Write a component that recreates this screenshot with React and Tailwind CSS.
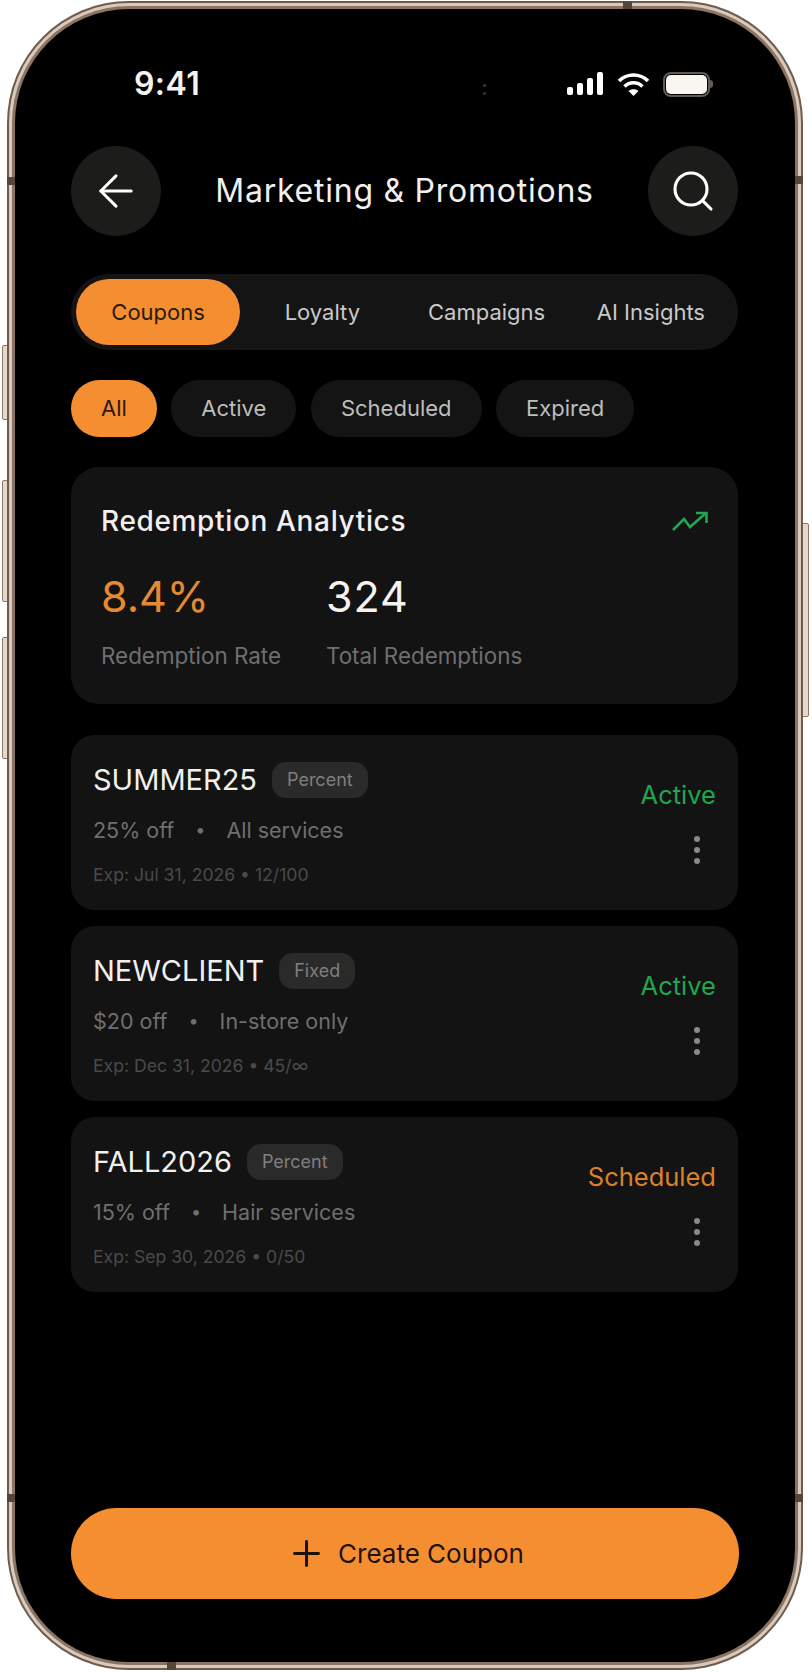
import React from 'react';
import { ArrowLeft, Search, Plus } from 'lucide-react';

const TABS = ['Coupons', 'Loyalty', 'Campaigns', 'AI Insights'];
const FILTERS = ['All', 'Active', 'Scheduled', 'Expired'];

const COUPONS = [
  { code: 'SUMMER25', type: 'Percent', off: '25% off', scope: 'All services', exp: 'Exp: Jul 31, 2026 • 12/100', status: 'Active', statusCls: 'text-[#20a551]' },
  { code: 'NEWCLIENT', type: 'Fixed', off: '$20 off', scope: 'In-store only', exp: 'Exp: Dec 31, 2026 • 45/∞', status: 'Active', statusCls: 'text-[#20a551]' },
  { code: 'FALL2026', type: 'Percent', off: '15% off', scope: 'Hair services', exp: 'Exp: Sep 30, 2026 • 0/50', status: 'Scheduled', statusCls: 'text-[#d9822b]' },
];

function SignalIcon() {
  return (
    <svg width="37" height="24" viewBox="0 0 37 24" fill="#fff">
      <rect x="0" y="15" width="6" height="8" rx="2" />
      <rect x="10" y="11" width="6" height="12" rx="2" />
      <rect x="20" y="6" width="6" height="17" rx="2" />
      <rect x="30" y="0" width="6" height="23" rx="2" />
    </svg>
  );
}

function WifiIcon() {
  return (
    <svg width="33" height="25" viewBox="0 0 33 25" fill="none" stroke="#fff" strokeWidth="3.6">
      <path d="M2 9 C10 1 23 1 31 9" />
      <path d="M7.5 14.5 C12.5 9.5 20.5 9.5 25.5 14.5" />
      <path d="M16.5 24 L11.5 19 C14 16.5 19 16.5 21.5 19 Z" fill="#fff" stroke="none" />
    </svg>
  );
}

function BatteryIcon() {
  return (
    <div className="flex items-center">
      <div className="w-[47px] h-[25px] rounded-[8px] border-[2px] border-[#5f5c5a] p-[1px]">
        <div className="w-full h-full rounded-[5px] bg-[#faf6f2]" />
      </div>
      <div className="w-[3px] h-[8px] rounded-r-full bg-[#5f5c5a]" />
    </div>
  );
}

function TrendIcon() {
  return (
    <svg width="36" height="21" viewBox="0 0 36 21" fill="none" stroke="#20a551" strokeWidth="2.6">
      <path d="M1 19 L12 8 L18 16 L34 2" />
      <path d="M24 2 L34.5 2 L34.5 12" />
    </svg>
  );
}

function CouponCard({ c }) {
  return (
    <div className="h-[175px] rounded-[24px] bg-[#131313] pl-[22px] pr-[22px] flex justify-between">
      <div className="pt-[27px]">
        <div className="flex items-center gap-[15px] h-[36px]">
          <span className="text-[29px] leading-[36px] text-[#f2f0ee]">{c.code}</span>
          <span className="h-[36px] px-[15px] rounded-[14px] bg-[#2a2a2a] text-[18px] leading-[36px] text-[#7f7f7f]">{c.type}</span>
        </div>
        <div className="mt-[14px] flex items-center gap-[21px] text-[21.5px] leading-[36px] text-[#6f6f6f]">
          <span>{c.off}</span>
          <span className="text-[18px]">•</span>
          <span>{c.scope}</span>
        </div>
        <div className="mt-[9px] text-[17.6px] leading-[36px] text-[#4a4a4a]">{c.exp}</div>
      </div>
      <div className="flex flex-col items-end pt-[43px]">
        <span className={`text-[25.5px] leading-[34px] ${c.statusCls}`}>{c.status}</span>
        <div className="mt-[24px] mr-[16px] flex flex-col gap-[5px]">
          <span className="w-[6px] h-[6px] rounded-full bg-[#8a8a8a]" />
          <span className="w-[6px] h-[6px] rounded-full bg-[#8a8a8a]" />
          <span className="w-[6px] h-[6px] rounded-full bg-[#8a8a8a]" />
        </div>
      </div>
    </div>
  );
}

export default function App() {
  return (
    <div className="relative w-[812px] h-[1672px] bg-white overflow-hidden font-['Inter',sans-serif]">
      {/* side buttons */}
      <div className="absolute left-[2px] top-[345px] w-[7px] h-[75px] rounded-l-[2px] bg-[#e6d8cb] border border-[#8d7766]" />
      <div className="absolute left-[2px] top-[480px] w-[7px] h-[122px] rounded-l-[2px] bg-[#e6d8cb] border border-[#8d7766]" />
      <div className="absolute left-[2px] top-[637px] w-[7px] h-[122px] rounded-l-[2px] bg-[#e6d8cb] border border-[#8d7766]" />
      <div className="absolute left-[801px] top-[523px] w-[8px] h-[194px] rounded-r-[2px] bg-[#e6d8cb] border border-[#8d7766]" />

      {/* phone frame */}
      <div className="absolute left-[7px] top-[1px] w-[796px] h-[1669px] rounded-[122px] bg-[#6e5b4b] p-[2px]">
        <div className="w-full h-full rounded-[120px] bg-[#d9cabd] p-[3px]">
          <div className="w-full h-full rounded-[117px] bg-[#8a7564] p-[3px]">
            <div className="w-full h-full rounded-[114px] bg-black overflow-hidden pl-[56px] pr-[57px] pb-[63px] flex flex-col">
              {/* status bar */}
              <div className="mt-[60px] h-[30px] flex items-center justify-between shrink-0">
                <span className="ml-[63px] text-[32px] leading-[30px] font-semibold tracking-[0.4px] text-[#f5f2ef]">9:41</span>
                <div className="flex items-center gap-[13px] mr-[25px]">
                  <SignalIcon />
                  <WifiIcon />
                  <BatteryIcon />
                </div>
              </div>

              {/* header */}
              <div className="mt-[47px] flex items-center justify-between shrink-0">
                <div className="w-[90px] h-[90px] rounded-full bg-[#1c1c1b] flex items-center justify-center">
                  <ArrowLeft size={52} strokeWidth={1.4} color="#fff" />
                </div>
                <h1 className="text-[32px] leading-[40px] font-normal tracking-[0.75px] text-[#f2f0ee]">Marketing &amp; Promotions</h1>
                <div className="w-[90px] h-[90px] rounded-full bg-[#1c1c1b] flex items-center justify-center">
                  <Search size={48} strokeWidth={1.55} color="#fff" />
                </div>
              </div>

              {/* tabs */}
              <div className="mt-[38px] h-[76px] rounded-full bg-[#141414] p-[5px] flex shrink-0">
                {TABS.map((t, i) => (
                  <div
                    key={t}
                    className={`flex-1 rounded-full flex items-center justify-center text-[22px] ${i === 0 ? 'bg-[#f58e30] text-[#2a1b0c]' : 'text-[#c9c9c9]'}`}
                  >
                    {t}
                  </div>
                ))}
              </div>

              {/* filters */}
              <div className="mt-[30px] flex gap-[14.5px] shrink-0">
                {FILTERS.map((f, i) => (
                  <div
                    key={f}
                    className={`h-[57px] px-[30px] rounded-full flex items-center text-[22px] ${i === 0 ? 'bg-[#f58e30] text-[#2a1b0c]' : 'bg-[#141414] text-[#bdbdbd]'}`}
                  >
                    {f}
                  </div>
                ))}
              </div>

              {/* analytics */}
              <div className="mt-[30px] h-[237px] rounded-[28px] bg-[#131313] px-[30px] pt-[36px] shrink-0">
                <div className="flex items-center justify-between h-[36px]">
                  <span className="text-[28px] leading-[36px] font-medium tracking-[0.65px] text-[#f2f0ee]">Redemption Analytics</span>
                  <TrendIcon />
                </div>
                <div className="mt-[31px] flex gap-[45px]">
                  <div>
                    <div className="text-[43px] leading-[52px] text-[#e48a30]">8.4%</div>
                    <div className="mt-[19px] text-[22.4px] leading-[30px] text-[#6f6f6f]">Redemption Rate</div>
                  </div>
                  <div>
                    <div className="text-[43px] leading-[52px] tracking-[1px] text-[#f5f2ef]">324</div>
                    <div className="mt-[19px] text-[22.4px] leading-[30px] text-[#6f6f6f]">Total Redemptions</div>
                  </div>
                </div>
              </div>

              {/* coupons */}
              <div className="mt-[31px] flex flex-col gap-[16px] shrink-0">
                {COUPONS.map(c => <CouponCard key={c.code} c={c} />)}
              </div>

              {/* create button */}
              <div className="mt-auto h-[91px] -mr-[1px] rounded-full bg-[#f58e30] flex items-center justify-center gap-[11px] text-[26px] text-[#1d1206] shrink-0">
                <Plus size={41} strokeWidth={1.75} />
                <span>Create Coupon</span>
              </div>
            </div>
          </div>
        </div>
      </div>

      {/* antenna bands on the frame */}
      <div className="absolute left-[7px] top-[177px] w-[8px] h-[8px] bg-[#55463a]" />
      <div className="absolute left-[795px] top-[176px] w-[8px] h-[8px] bg-[#55463a]" />
      <div className="absolute left-[7px] top-[1494px] w-[8px] h-[8px] bg-[#55463a]" />
      <div className="absolute left-[795px] top-[1494px] w-[8px] h-[8px] bg-[#55463a]" />
      <div className="absolute left-[623px] top-[1px] w-[9px] h-[8px] bg-[#55463a]" />
      <div className="absolute left-[167px] top-[1662px] w-[9px] h-[8px] bg-[#55463a]" />

      {/* camera dots */}
      <div className="absolute left-[483px] top-[84px] w-[3px] h-[3px] rounded-full bg-[#4a3a2c]" />
      <div className="absolute left-[483px] top-[92px] w-[3px] h-[3px] rounded-full bg-[#333]" />
    </div>
  );
}
